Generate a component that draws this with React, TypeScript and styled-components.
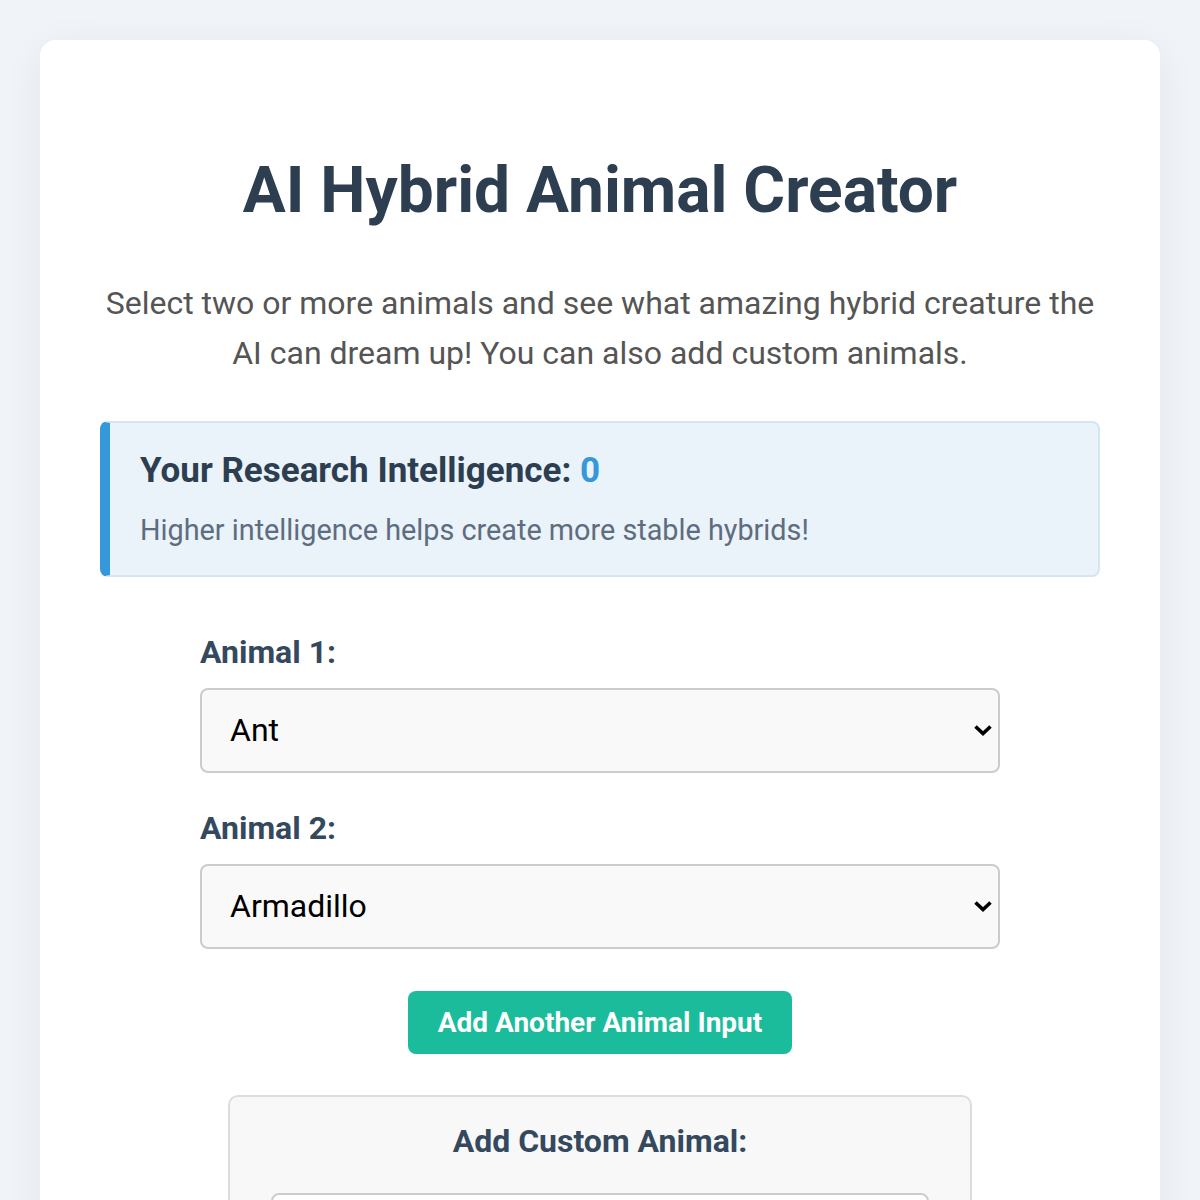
import styled, { createGlobalStyle } from "styled-components";

const GlobalStyle = createGlobalStyle`
  html, body {
    margin: 0;
    padding: 0;
    background: #f0f4f8;
    font-family: Roboto, "Liberation Sans", sans-serif;
  }
`;

const Page = styled.div`
  padding: 40px;
`;

const Container = styled.div`
  background: #ffffff;
  border-radius: 16px;
  box-shadow: 0 8px 40px rgba(0, 0, 0, 0.06);
  padding: 113px 60px 60px;
`;

const Title = styled.h1`
  margin: 0 0 48px;
  text-align: center;
  font-size: 64px;
  font-weight: 700;
  line-height: 1.2;
  color: #2c3e50;
`;

const Intro = styled.p`
  margin: 0 0 43px;
  text-align: center;
  font-size: 32px;
  line-height: 50px;
  color: #555;
`;

const InfoBox = styled.div`
  background: #eaf2fa;
  border: 2px solid #d4e6f1;
  border-left: 10px solid #3498db;
  border-radius: 8px;
  padding: 27px 30px 28px;
  margin-bottom: 56px;
`;

const InfoTitle = styled.h3`
  margin: 0 0 22px;
  font-size: 35px;
  font-weight: 700;
  color: #2c3e50;
`;

const Score = styled.span`
  color: #3498db;
`;

const InfoText = styled.p`
  margin: 0;
  font-size: 28.8px;
  color: #5d6d7e;
`;

const Form = styled.div`
  width: 800px;
  margin: 0 auto;
`;

const Field = styled.div`
  margin-bottom: 36px;
`;

const Label = styled.label`
  display: block;
  font-size: 32px;
  font-weight: 700;
  color: #34495e;
  margin-bottom: 17px;
`;

const SelectWrap = styled.div`
  position: relative;
`;

const Select = styled.select`
  appearance: none;
  width: 100%;
  height: 85px;
  box-sizing: border-box;
  padding: 0 60px 0 28px;
  font-family: Roboto, "Liberation Sans", sans-serif;
  font-size: 32px;
  color: #000;
  background: #f9f9f9;
  border: 2px solid #ccc;
  border-radius: 8px;
`;

const Chevron = styled.svg`
  position: absolute;
  right: 7px;
  top: 50%;
  width: 20px;
  height: 12px;
  margin-top: -6px;
  pointer-events: none;
`;

const ButtonRow = styled.div`
  display: flex;
  justify-content: center;
  margin-top: 42px;
`;

const AddButton = styled.button`
  background: #1abc9c;
  color: #fff;
  border: none;
  border-radius: 8px;
  height: 63px;
  padding: 0 30px;
  font-family: Roboto, "Liberation Sans", sans-serif;
  font-size: 28px;
  font-weight: 700;
`;

const CustomBox = styled.div`
  width: 744px;
  box-sizing: border-box;
  margin: 41px auto 0;
  background: #f8f8f8;
  border: 2px solid #ddd;
  border-radius: 10px;
  padding: 25px 41px 40px;
`;

const CustomTitle = styled.h4`
  margin: 0 0 33px;
  text-align: center;
  font-size: 32px;
  font-weight: 700;
  color: #34495e;
`;

const TextInput = styled.input`
  width: 100%;
  height: 80px;
  box-sizing: border-box;
  border: 2px solid #ccc;
  border-radius: 8px;
  background: #fff;
  font-size: 30px;
  padding: 0 24px;
`;

const animals = ["Ant", "Armadillo", "Bear", "Cat", "Dog", "Eagle"];

const App = () => {
  return (
    <Page>
      <GlobalStyle />
      <Container>
        <Title>AI Hybrid Animal Creator</Title>
        <Intro>
          Select two or more animals and see what amazing hybrid creature the
          AI can dream up! You can also add custom animals.
        </Intro>
        <InfoBox>
          <InfoTitle>
            Your Research Intelligence: <Score>0</Score>
          </InfoTitle>
          <InfoText>Higher intelligence helps create more stable hybrids!</InfoText>
        </InfoBox>
        <Form>
          {["Ant", "Armadillo"].map((value, i) => (
            <Field key={i}>
              <Label>Animal {i + 1}:</Label>
              <SelectWrap>
                <Select defaultValue={value}>
                  {animals.map((a) => (
                    <option key={a}>{a}</option>
                  ))}
                </Select>
                <Chevron viewBox="0 0 20 12">
                  <path
                    d="M2.5 2.5 L10 9.5 L17.5 2.5"
                    fill="none"
                    stroke="#000"
                    strokeWidth="3.6"
                  />
                </Chevron>
              </SelectWrap>
            </Field>
          ))}
          <ButtonRow>
            <AddButton>Add Another Animal Input</AddButton>
          </ButtonRow>
          <CustomBox>
            <CustomTitle>Add Custom Animal:</CustomTitle>
            <TextInput placeholder="Enter animal name" />
          </CustomBox>
        </Form>
      </Container>
    </Page>
  );
};

export default App;
